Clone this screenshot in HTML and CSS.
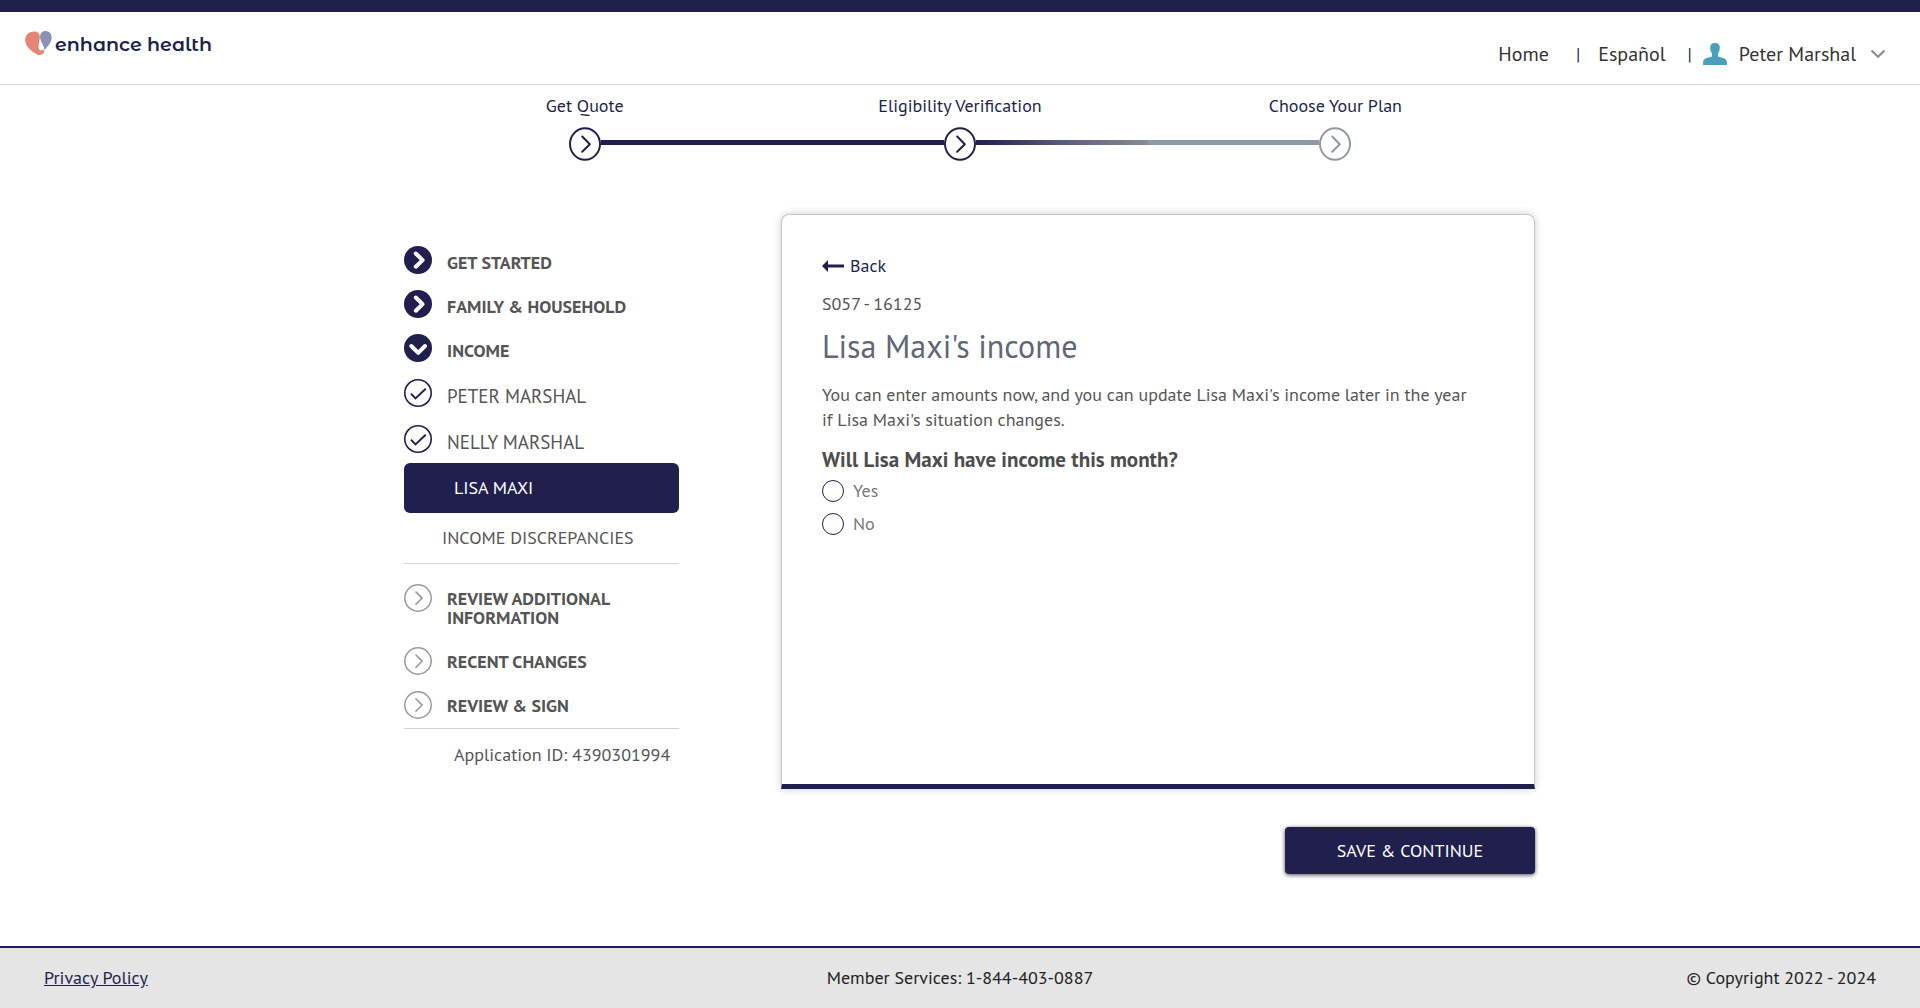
FILE: index.html
```html
<!DOCTYPE html>
<html lang="en">
<head>
<meta charset="utf-8">
<meta name="viewport" content="width=device-width, initial-scale=1">
<title>Enhance Health - Eligibility Verification</title>
<link rel="stylesheet" href="styles.css">
</head>
<body>
<svg class="sprite" aria-hidden="true">
  <symbol id="step" viewBox="0 0 32 34"><ellipse cx="16" cy="17" rx="15" ry="15.8" fill="#fff" stroke="currentColor" stroke-width="2"/><path d="M13.2 9.5l7.6 7.7-7.6 7.6" fill="none" stroke="currentColor" stroke-width="2" stroke-linecap="round" stroke-linejoin="round"/></symbol>
  <symbol id="solid-right" viewBox="0 0 28 28"><circle cx="14" cy="14" r="14" fill="currentColor"/><path d="M11.8 7.5l6.8 6.6-6.8 6.6" fill="none" stroke="#fff" stroke-width="4" stroke-linecap="round" stroke-linejoin="round"/></symbol>
  <symbol id="solid-down" viewBox="0 0 28 28"><circle cx="14" cy="14" r="14" fill="currentColor"/><path d="M7.3 12l6.9 6.8 6.8-6.8" fill="none" stroke="#fff" stroke-width="4" stroke-linecap="round" stroke-linejoin="round"/></symbol>
  <symbol id="check" viewBox="0 0 28 28"><circle cx="14" cy="14" r="13.2" fill="none" stroke="currentColor" stroke-width="1.6"/><path d="M7 14.6l4.5 4.9L21.7 9.7" fill="none" stroke="currentColor" stroke-width="1.9"/></symbol>
  <symbol id="ring-right" viewBox="0 0 28 28"><circle cx="14" cy="14" r="13.2" fill="none" stroke="currentColor" stroke-width="1.5"/><path d="M11.5 7.5l6.6 6.6-6.6 6.6" fill="none" stroke="currentColor" stroke-width="1.6"/></symbol>
</svg>

<header class="site-header">
  <a class="logo" href="#">
    <svg class="logo-mark" viewBox="0 0 27 25" aria-hidden="true">
      <path d="M8 .7C13-.2 15.4 3 14.8 7.5c-.8 5-1.800 8-.8 10.500.6 1.700 2.200 1.500 3.900 1 1.300-.2 1.700 1.100 1 2.600-1 2.200-3.700 3-6.600 1.800C8 21.600 2 17 .5 11.500-.8 5.500 2.500 1 8 .7z" fill="#e58673"/>
      <path d="M20.500 0c4 0 6.500 3 6.100 7.200-.4 4.500-3.600 8.300-7.400 11.800.3-4.500-3.700-7.500-4.100-12.500C14.900 2.600 17 0 20.500 0z" fill="#8a92b8"/>
    </svg>
    <span>enhance health</span>
  </a>
  <nav class="top-nav" aria-label="Account">
    <a class="home" href="#">Home</a>
    <span class="bar">|</span>
    <a class="language" href="#">Español</a>
    <span class="bar">|</span>
    <button class="user" type="button">
      <svg class="avatar" viewBox="0 0 24 22" aria-hidden="true"><path d="M12 0c3.200 0 4.800 1.600 4.800 4.400 0 2.800-.8 4.600-1.800 6v3.200c4.500 1.200 8.300 2.200 8.800 4.800L24 22H0l.2-3.600c.5-2.600 4.300-3.600 8.800-4.800v-3.200c-1-1.400-1.800-3.200-1.800-6C7.200 1.600 8.800 0 12 0z" fill="#4a9fba"/></svg>
      <span>Peter Marshal</span>
      <svg class="caret" viewBox="0 0 16 10" aria-hidden="true"><path d="M1.500 1.500L8 7.800l6.500-6.300" fill="none" stroke="#8c8c8c" stroke-width="2.200"/></svg>
    </button>
  </nav>
</header>

<ol class="steps">
  <li class="step"><span class="step-label">Get Quote</span><span class="line none"></span><svg class="step-icon"><use href="#step"/></svg><span class="line done"></span></li>
  <li class="step"><span class="step-label">Eligibility Verification</span><span class="line done"></span><svg class="step-icon"><use href="#step"/></svg><span class="line fading"></span></li>
  <li class="step"><span class="step-label">Choose Your Plan</span><span class="line todo"></span><svg class="step-icon pending"><use href="#step"/></svg><span class="line none"></span></li>
</ol>

<main class="layout">
  <aside class="sidebar">
    <nav aria-label="Application sections">
      <ul class="menu">
        <li><a class="item section" href="#"><svg><use href="#solid-right"/></svg><span>GET STARTED</span></a></li>
        <li><a class="item section" href="#"><svg><use href="#solid-right"/></svg><span>FAMILY &amp; HOUSEHOLD</span></a></li>
        <li><a class="item section" href="#"><svg><use href="#solid-down"/></svg><span>INCOME</span></a></li>
        <li><a class="item person" href="#"><svg><use href="#check"/></svg><span>PETER MARSHAL</span></a></li>
        <li><a class="item person" href="#"><svg><use href="#check"/></svg><span>NELLY MARSHAL</span></a></li>
        <li><a class="current" href="#" aria-current="page">LISA MAXI</a></li>
        <li><a class="sub" href="#">INCOME DISCREPANCIES</a></li>
      </ul>
      <ul class="menu later">
        <li><a class="item section upcoming tall" href="#"><svg><use href="#ring-right"/></svg><span>REVIEW ADDITIONAL INFORMATION</span></a></li>
        <li><a class="item section upcoming" href="#"><svg><use href="#ring-right"/></svg><span>RECENT CHANGES</span></a></li>
        <li><a class="item section upcoming" href="#"><svg><use href="#ring-right"/></svg><span>REVIEW &amp; SIGN</span></a></li>
      </ul>
    </nav>
    <p class="application-id">Application ID: 4390301994</p>
  </aside>

  <form class="content">
    <section class="card">
      <a class="back" href="#"><svg viewBox="0 0 22 12" aria-hidden="true"><path d="M0 6L6 0v4.600h16v2.800H6V12z" fill="currentColor"/></svg><span>Back</span></a>
      <p class="code">S057 - 16125</p>
      <h1>Lisa Maxi's income</h1>
      <p class="intro">You can enter amounts now, and you can update Lisa Maxi's income later in the year if Lisa Maxi's situation changes.</p>
      <fieldset class="question">
        <legend>Will Lisa Maxi have income this month?</legend>
        <label class="choice"><input type="radio" name="income" value="yes"><span>Yes</span></label>
        <label class="choice"><input type="radio" name="income" value="no"><span>No</span></label>
      </fieldset>
    </section>
    <button class="save" type="submit">SAVE &amp; CONTINUE</button>
  </form>
</main>

<footer class="site-footer">
  <a href="#">Privacy Policy</a>
  <span class="member">Member Services: 1-844-403-0887</span>
  <span class="copyright">© Copyright 2022 - 2024</span>
</footer>
</body>
</html>
```
FILE: styles.css
```css
:root {
  --navy: #211f4d;
  --text: #555;
  --rule: #d3d3d3;
}

* { box-sizing: border-box; }

body {
  margin: 0;
  min-height: 100vh;
  display: flex;
  flex-direction: column;
  background: #fff;
  color: var(--text);
  font: 18px/24px "PT Sans", "Noto Sans CJK SC", "Noto Sans", sans-serif;
}

a { color: inherit; text-decoration: none; }
button { font: inherit; cursor: pointer; }
ul, ol { list-style: none; margin: 0; padding: 0; }
.sprite { position: absolute; width: 0; height: 0; }

/* Header */
.site-header {
  display: flex;
  justify-content: space-between;
  align-items: flex-start;
  height: 85px;
  padding: 0 34px 0 25px;
  border-top: 12px solid var(--navy);
  border-bottom: 1px solid #d8d8d8;
}
.logo {
  display: flex;
  gap: 3px;
  padding-top: 19px;
  color: var(--navy);
  font: 600 19px/28px "Montserrat Alternates", Inter, sans-serif;
}
.logo-mark { width: 27px; height: 25px; }
.top-nav {
  display: flex;
  align-items: center;
  padding-top: 30px;
  color: #333;
  font-size: 20px;
}
.home { margin-right: 27px; }
.bar { color: var(--navy); font-size: 18px; }
.language { margin: 0 22px 0 18px; }
.user {
  display: flex;
  align-items: center;
  gap: 12px;
  margin-left: 11px;
  padding: 0;
  border: 0;
  background: none;
  color: inherit;
}
.avatar { width: 24px; height: 22px; }
.caret { width: 16px; height: 10px; margin-left: 2px; }

/* Progress steps */
.steps {
  display: grid;
  grid-template-columns: repeat(3, 1fr);
  width: 100%;
  max-width: 1126px;
  margin: 0 auto;
  padding-top: 9px;
  color: var(--navy);
}
.step {
  display: grid;
  grid-template-columns: 1fr 32px 1fr;
  row-gap: 9px;
}
.step-label { grid-column: 1 / -1; text-align: center; }
.step-icon { width: 32px; height: 34px; }
.pending { color: #8f99a6; }
.line { height: 5px; margin-top: 13px; }
.done { background: var(--navy); }
.todo { background: #8f99a6; }
.fading { background: linear-gradient(to right, #211f4d, #5d6180 55%, #868c94); }

/* Two-column body */
.layout {
  display: grid;
  grid-template-columns: 275px minmax(0, 1fr);
  column-gap: 102px;
  width: 100%;
  max-width: 1170px;
  margin: 0 auto;
  padding: 53px 10px 72px 29px;
}

/* Section menu */
.sidebar { padding-top: 24px; }
.menu { border-bottom: 1px solid var(--rule); }
.item {
  display: grid;
  grid-template-columns: 28px 1fr;
  column-gap: 15px;
  padding: 8px 0;
  line-height: 19px;
}
.item svg { width: 28px; height: 28px; color: var(--navy); }
.item span { padding-top: 7px; }
.section { min-height: 44px; font-weight: 700; }
.person { padding: 9px 0; font-size: 19px; }
.item.person span { padding-top: 8px; }
.item.upcoming svg { color: #999; }
.item.upcoming span { padding-top: 5px; }
.tall { padding-bottom: 12px; }
.current {
  display: block;
  margin-top: 1px;
  padding: 13px 50px;
  border-radius: 6px;
  background: var(--navy);
  color: #fff;
}
.sub { display: block; padding: 13px 0 13px 38px; }
.later { padding: 12px 0 1px; }
.application-id { margin: 14px 0 0; padding-left: 50px; white-space: nowrap; }

/* Question card */
.content { display: flex; flex-direction: column; align-items: flex-end; gap: 38px; }
.card {
  width: 100%;
  min-height: 575px;
  padding: 39px 40px;
  border: 1px solid #c4c4c4;
  border-bottom: 5px solid var(--navy);
  border-radius: 8px 8px 0 0;
  box-shadow: 0 0 8px rgba(0, 0, 0, .2);
}
.back {
  display: inline-flex;
  align-items: center;
  gap: 6px;
  color: var(--navy);
}
.back svg { width: 22px; height: 12px; }
.code { margin: 14px 0 0; }
h1 {
  margin: 10px 0 0;
  color: #5f6675;
  font-size: 32px;
  font-weight: 400;
  line-height: 40px;
}
.intro { margin: 16px 0 0; padding-right: 16px; line-height: 25px; }
.question { margin: 16px 0 0; padding: 0; border: 0; }
legend { padding: 0; font-size: 21px; font-weight: 700; color: #4d4d4d; }
.choice {
  display: flex;
  align-items: center;
  gap: 9px;
  height: 24px;
  margin: 7px 0 9px;
  color: #777;
}
.choice input {
  appearance: none;
  width: 22px;
  height: 22px;
  margin: 0;
  border: 1px solid var(--navy);
  border-radius: 50%;
}
.choice input:checked { box-shadow: inset 0 0 0 5px #fff; background: var(--navy); }
.save {
  width: 250px;
  height: 47px;
  border: 0;
  border-radius: 4px;
  background: var(--navy);
  color: #fff;
  box-shadow: 0 1px 4px rgba(0, 0, 0, .7);
}

/* Footer */
.site-footer {
  display: grid;
  grid-template-columns: 1fr auto 1fr;
  align-items: center;
  margin-top: auto;
  padding: 18px 44px;
  border-top: 2px solid var(--navy);
  background: #e5e5e5;
  color: #222;
}
.site-footer a { justify-self: start; color: var(--navy); text-decoration: underline; }
.copyright { justify-self: end; }

@media (max-width: 900px) {
  .layout { grid-template-columns: 1fr; row-gap: 32px; padding: 32px 16px; }
}
```
